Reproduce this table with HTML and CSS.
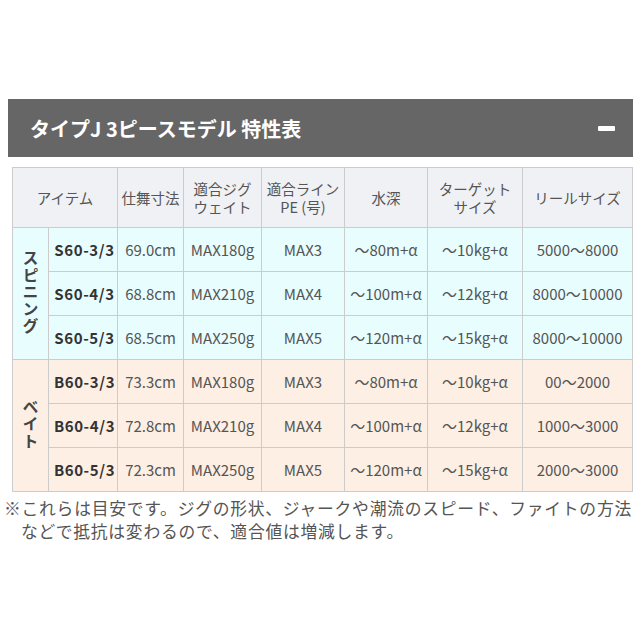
FILE: index.html
```html
<!DOCTYPE html>
<html lang="ja">
<head>
<meta charset="utf-8">
<link rel="stylesheet" href="styles.css">
</head>
<body>
<div class="page">
  <div class="bar">
    <h2 class="bar-title">タイプJ 3ピースモデル 特性表</h2>
    <span class="minus"></span>
  </div>
  <table class="spec">
    <colgroup>
      <col class="c-cat"><col class="c-model"><col class="c-len"><col class="c-jig"><col class="c-line"><col class="c-depth"><col class="c-target"><col class="c-reel">
    </colgroup>
    <thead>
      <tr class="head">
        <th colspan="2">アイテム</th>
        <th>仕舞寸法</th>
        <th>適合ジグ<br>ウェイト</th>
        <th>適合ライン<br>PE (号)</th>
        <th>水深</th>
        <th>ターゲット<br>サイズ</th>
        <th>リールサイズ</th>
      </tr>
    </thead>
    <tbody class="spin">
      <tr>
        <th class="cat" rowspan="3"><span class="vert">スピニング</span></th>
        <td class="model">S60-3/3</td><td>69.0cm</td><td>MAX180g</td><td>MAX3</td><td>～80m+α</td><td>～10kg+α</td><td>5000～8000</td>
      </tr>
      <tr>
        <td class="model">S60-4/3</td><td>68.8cm</td><td>MAX210g</td><td>MAX4</td><td>～100m+α</td><td>～12kg+α</td><td>8000～10000</td>
      </tr>
      <tr>
        <td class="model">S60-5/3</td><td>68.5cm</td><td>MAX250g</td><td>MAX5</td><td>～120m+α</td><td>～15kg+α</td><td>8000～10000</td>
      </tr>
    </tbody>
    <tbody class="bait">
      <tr>
        <th class="cat" rowspan="3"><span class="vert">ベイト</span></th>
        <td class="model">B60-3/3</td><td>73.3cm</td><td>MAX180g</td><td>MAX3</td><td>～80m+α</td><td>～10kg+α</td><td>00～2000</td>
      </tr>
      <tr>
        <td class="model">B60-4/3</td><td>72.8cm</td><td>MAX210g</td><td>MAX4</td><td>～100m+α</td><td>～12kg+α</td><td>1000～3000</td>
      </tr>
      <tr>
        <td class="model">B60-5/3</td><td>72.3cm</td><td>MAX250g</td><td>MAX5</td><td>～120m+α</td><td>～15kg+α</td><td>2000～3000</td>
      </tr>
    </tbody>
  </table>
  <p class="note">※これらは目安です。ジグの形状、ジャークや潮流のスピード、ファイトの方法<br>などで抵抗は変わるので、適合値は増減します。</p>
</div>
</body>
</html>
```
FILE: styles.css
```css
html, body {
  margin: 0;
  padding: 0;
  background: #ffffff;
}
body {
  font-family: "Noto Sans CJK JP", "Noto Sans", sans-serif;
  color: #555555;
}
.page {
  padding-top: 99px;
}
.bar {
  margin-left: 8px;
  width: 625px;
  height: 58px;
  background: #666666;
  display: flex;
  align-items: center;
  justify-content: space-between;
  box-sizing: border-box;
  padding: 0 18px 0 22px;
}
.bar-title {
  margin: 0;
  color: #ffffff;
  font-size: 20px;
  font-weight: 700;
  letter-spacing: 0;
}
.minus {
  display: block;
  width: 17px;
  height: 5px;
  border-radius: 1px;
  background: #ffffff;
}
.spec {
  margin: 10px 0 0 12px;
  width: 621px;
  table-layout: fixed;
  border-collapse: collapse;
  font-size: 15px;
  color: #555555;
}
.c-cat { width: 36px; }
.c-model { width: 69px; }
.c-len { width: 66px; }
.c-jig { width: 78px; }
.c-line { width: 83px; }
.c-depth { width: 83px; }
.c-target { width: 95px; }
.c-reel { width: 110px; }
.spec th, .spec td {
  border: 1px solid #cccccc;
  text-align: center;
  vertical-align: middle;
  padding: 0;
  white-space: nowrap;
  line-height: 17px;
}
.head {
  height: 60px;
  background: #eff1f4;
}
.head th {
  font-weight: 400;
  font-size: 14.5px;
  line-height: 18px;
}
.spin tr, .bait tr {
  height: 44px;
}
.spin { background: #e8fdfd; }
.bait { background: #fdefe3; }
.model {
  font-weight: 700;
  color: #333333;
  text-align: left;
  padding-left: 3px !important;
  letter-spacing: 0.6px;
}
.cat {
  font-weight: 700;
  color: #444444;
}
.vert {
  display: inline-block;
  writing-mode: vertical-rl;
  text-orientation: upright;
  font-size: 16px;
  line-height: 16px;
  letter-spacing: 1px;
}
.note {
  margin: 5px 0 0 4px;
  width: 636px;
  padding-left: 17px;
  text-indent: -17px;
  box-sizing: border-box;
  font-size: 16.8px;
  line-height: 23px;
  color: #555555;
  letter-spacing: 0.75px;
  white-space: nowrap;
}
```
